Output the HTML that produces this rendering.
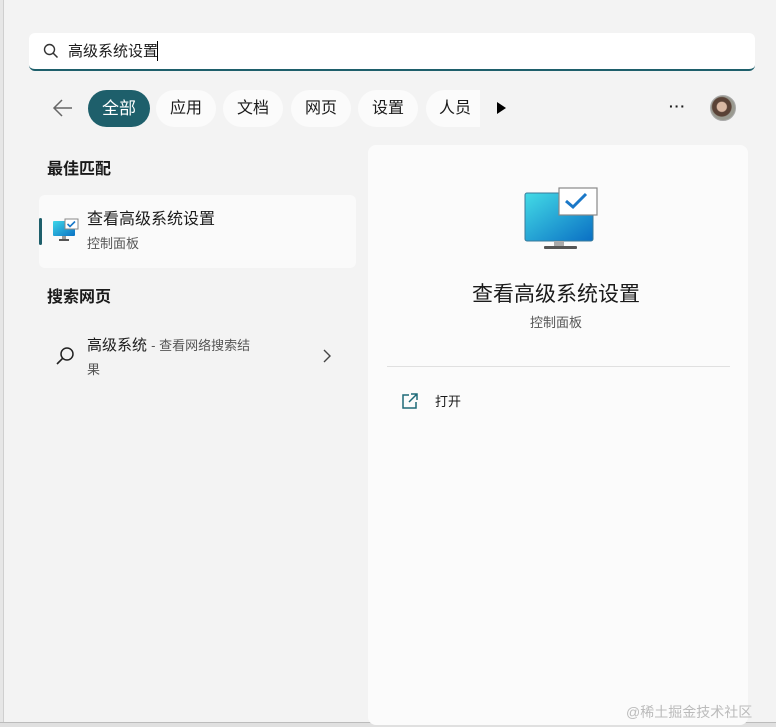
<!DOCTYPE html>
<html><head><meta charset="utf-8"><style>
*{margin:0;padding:0;box-sizing:border-box}
body{width:776px;height:727px;background:#f3f3f3;font-family:"Liberation Sans","Noto Sans CJK SC",sans-serif;color:#1a1a1a;position:relative;overflow:hidden}
.a{position:absolute;white-space:nowrap}
.chip{position:absolute;top:90px;height:37px;border-radius:19px;background:#fbfbfb;font-size:16px;line-height:37px;text-align:center;color:#1a1a1a}
</style></head><body>
<div class="a" style="left:0;top:0;width:4px;height:727px;background:#e6e6e6;border-right:1px solid #cfcfcf"></div>
<div class="a" style="left:0;top:722px;width:776px;height:5px;background:#e0e0e0;border-top:1px solid #bcbcbc"></div>
<div class="a" style="left:29px;top:33px;width:726px;height:38px;background:#fff;border-radius:6px;border-bottom:2px solid #1e5f6b"></div>
<svg class="a" style="left:43px;top:43px" width="16" height="16" viewBox="0 0 16 16"><circle cx="6.5" cy="6.5" r="5" fill="none" stroke="#333" stroke-width="1.4"/><path d="M10 10L14.5 14.5" stroke="#333" stroke-width="1.5"/></svg>
<div class="a" style="left:68px;top:43px;font-size:15px;line-height:18px">高级系统设置</div>
<div class="a" style="left:157px;top:41px;width:1px;height:20px;background:#000"></div>
<svg class="a" style="left:52px;top:98px" width="22" height="20" viewBox="0 0 22 20"><path d="M20 10H2M10 2L2 10l8 8" fill="none" stroke="#666" stroke-width="1.5"/></svg>
<div class="chip" style="left:88px;width:62px;background:#1e5f6b;color:#fff;font-size:17px">全部</div>
<div class="chip" style="left:156px;width:60px">应用</div>
<div class="chip" style="left:223px;width:60px">文档</div>
<div class="chip" style="left:291px;width:60px">网页</div>
<div class="chip" style="left:358px;width:60px">设置</div>
<div class="chip" style="left:426px;width:54px;border-radius:19px 0 0 19px;text-align:left;padding-left:13px">人员</div>
<svg class="a" style="left:496px;top:101px" width="12" height="14"><path d="M1 1L10 7L1 13Z" fill="#000"/></svg>
<div class="a" style="left:669px;top:98px;font-size:14px;letter-spacing:1px;font-weight:bold">···</div>
<div class="a" style="left:710px;top:95px;width:26px;height:26px;border-radius:50%;background:radial-gradient(circle at 45% 45%,#d9b8a3 0 25%,#5a4236 30% 50%,#9a9a90 55%);border:1px solid #aaa"></div>
<div class="a" style="left:47px;top:159px;font-size:16px;font-weight:bold;line-height:22px">最佳匹配</div>
<div class="a" style="left:39px;top:195px;width:317px;height:73px;background:#fafafa;border-radius:6px"></div>
<div class="a" style="left:39px;top:218px;width:3px;height:27px;background:#1e5f6b;border-radius:2px"></div>
<svg class="a" style="left:52px;top:218px" width="28" height="27" viewBox="0 0 28 27"><defs><linearGradient id="g" x1="0" y1="0" x2="1" y2="1"><stop offset="0" stop-color="#3ed6e8"/><stop offset="1" stop-color="#0a72c4"/></linearGradient></defs><rect x="1" y="3" width="22" height="15" rx="1" fill="url(#g)"/><rect x="10" y="18" width="4" height="3" fill="#999"/><rect x="7" y="21" width="10" height="2" fill="#555"/><rect x="13" y="1" width="13" height="10" fill="#fff" stroke="#888"/><path d="M15.5 6l2.5 2.5 5-5" fill="none" stroke="#1a78c8" stroke-width="1.6"/></svg>
<div class="a" style="left:87px;top:209px;font-size:16px;line-height:22px">查看高级系统设置</div>
<div class="a" style="left:87px;top:235px;font-size:13px;line-height:18px;color:#555">控制面板</div>
<div class="a" style="left:47px;top:287px;font-size:16px;font-weight:bold;line-height:22px">搜索网页</div>
<svg class="a" style="left:55px;top:346px" width="20" height="20" viewBox="0 0 20 20"><circle cx="12" cy="8" r="6" fill="none" stroke="#222" stroke-width="1.5"/><path d="M7.8 12.2L2 18" stroke="#222" stroke-width="1.6"/></svg>
<div class="a" style="left:87px;top:335px;font-size:15px;line-height:22px">高级系统 <span style="font-size:13px;color:#555">- 查看网络搜索结</span></div>
<div class="a" style="left:87px;top:361px;font-size:13px;line-height:18px;color:#555">果</div>
<svg class="a" style="left:322px;top:349px" width="10" height="14"><path d="M2 1l6 6-6 6" fill="none" stroke="#444" stroke-width="1.4"/></svg>
<div class="a" style="left:368px;top:145px;width:380px;height:580px;background:#fbfbfb;border-radius:8px"></div>
<svg class="a" style="left:523px;top:186px" width="76" height="64" viewBox="0 0 76 64"><defs><linearGradient id="h" x1="0" y1="0" x2="1" y2="1"><stop offset="0" stop-color="#43dbe6"/><stop offset="1" stop-color="#0a6fc4"/></linearGradient></defs><rect x="2" y="7" width="68" height="48" rx="2" fill="url(#h)" stroke="#3a7a9a" stroke-width="1"/><rect x="31" y="55" width="10" height="6" fill="#aaa"/><rect x="21" y="60" width="33" height="3" rx="1" fill="#555"/><rect x="36" y="2" width="38" height="27" fill="#fff" stroke="#888" stroke-width="1.2"/><path d="M43 15l7 6 13-13" fill="none" stroke="#1a78c8" stroke-width="3"/></svg>
<div class="a" style="left:366px;top:281px;width:380px;text-align:center;font-size:21px;line-height:28px">查看高级系统设置</div>
<div class="a" style="left:366px;top:314px;width:380px;text-align:center;font-size:13px;line-height:18px;color:#555">控制面板</div>
<div class="a" style="left:387px;top:366px;width:343px;height:1px;background:#e0e0e0"></div>
<svg class="a" style="left:401px;top:393px" width="18" height="17" viewBox="0 0 18 17"><path d="M8 2H2v13h13V9" fill="none" stroke="#1e6a78" stroke-width="1.5"/><path d="M10 1h6v6M16 1L8 9" fill="none" stroke="#1e6a78" stroke-width="1.5"/></svg>
<div class="a" style="left:435px;top:393px;font-size:13px;line-height:18px">打开</div>
<div class="a" style="left:626px;top:702px;font-size:14px;color:#bbb;line-height:20px">@稀土掘金技术社区</div>
</body></html>
